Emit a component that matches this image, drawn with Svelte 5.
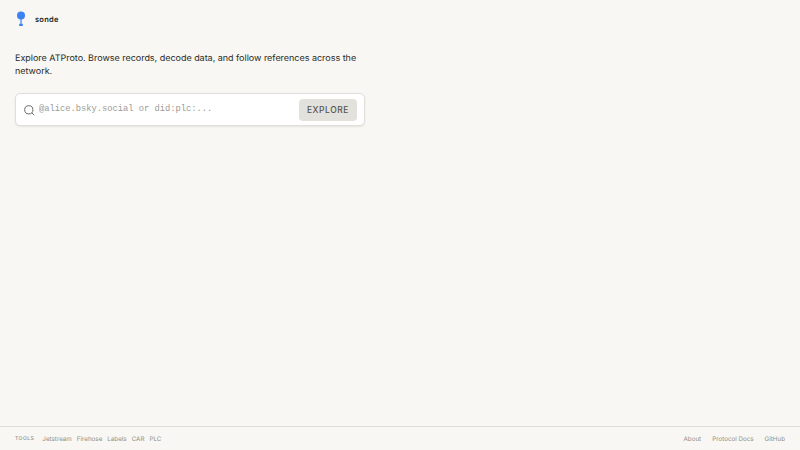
<script>
  const tools = ['Jetstream', 'Firehose', 'Labels', 'CAR', 'PLC'];
  const links = ['About', 'Protocol Docs', 'GitHub'];
</script>

<div class="page">
  <header class="header">
    <svg class="logo" width="12" height="16" viewBox="0 0 12 16" aria-hidden="true">
      <circle cx="6" cy="4.6" r="4" fill="#3b82f6" />
      <rect x="5.4" y="8" width="1.2" height="5" fill="#3b82f6" />
      <rect x="4.2" y="12.8" width="3.6" height="2.2" fill="#3b82f6" />
    </svg>
    <span class="brand">sonde</span>
  </header>

  <main class="main">
    <p class="intro">Explore ATProto. Browse records, decode data, and follow references across the network.</p>
    <form class="search" onsubmit={(e) => e.preventDefault()}>
      <svg class="icon" width="11" height="11" viewBox="0 0 11 11" fill="none" stroke="#6b6b66" stroke-width="1" aria-hidden="true">
        <circle cx="4.8" cy="4.8" r="4.1" />
        <path d="M7.8 7.8 10.2 10.2" />
      </svg>
      <input class="input" placeholder="@alice.bsky.social or did:plc:..." />
      <button class="button" type="submit">EXPLORE</button>
    </form>
  </main>

  <footer class="footer">
    <nav class="group left">
      <span class="label">TOOLS</span>
      {#each tools as t}<a href="#top">{t}</a>{/each}
    </nav>
    <nav class="group right">
      {#each links as l}<a href="#top">{l}</a>{/each}
    </nav>
  </footer>
</div>

<style>
  :global(body) {
    margin: 0;
    background: #f8f7f3;
  }
  .page {
    height: 450px;
    display: flex;
    flex-direction: column;
    font-family: Inter, "Liberation Sans", sans-serif;
    color: #1f1f1c;
    overflow: hidden;
    text-rendering: geometricPrecision;
  }
  .header {
    display: flex;
    align-items: center;
    gap: 8px;
    padding: 11px 15px 0;
    height: 16px;
  }
  .logo {
    flex: none;
    margin-top: -1px;
  }
  .brand {
    font-size: 7.5px;
    font-weight: 600;
    letter-spacing: 0.25px;
  }
  .main {
    flex: 1;
    padding: 25px 15px 0;
  }
  .intro {
    margin: 0;
    width: 350px;
    font-size: 9px;
    line-height: 13px;
    letter-spacing: -0.02px;
    color: #2a2a26;
  }
  .search {
    margin-top: 15px;
    width: 350px;
    height: 33px;
    box-sizing: border-box;
    display: flex;
    align-items: center;
    padding: 0 7px 0 8px;
    background: #fff;
    border: 1px solid #dfded9;
    border-radius: 5px;
    box-shadow: 0 1px 2px rgba(0, 0, 0, 0.08);
  }
  .icon {
    flex: none;
    margin: 1px 0 0 0;
  }
  .input {
    flex: 1;
    min-width: 0;
    margin-left: 4px;
    border: 0;
    outline: 0;
    padding: 0;
    background: none;
    font-family: "Liberation Mono", monospace;
    font-size: 8.75px;
    margin-top: -2px;
  }
  .input::placeholder {
    color: #9a9a94;
    opacity: 1;
  }
  .button {
    flex: none;
    width: 58px;
    height: 22px;
    border: 0;
    padding: 0;
    border-radius: 4px;
    background: #e2e1dc;
    color: #55554f;
    font-family: Inter, "Liberation Sans", sans-serif;
    font-size: 8.5px;
    font-weight: 500;
    letter-spacing: 0.55px;
  }
  .footer {
    height: 24px;
    box-sizing: border-box;
    border-top: 1px solid #dfded9;
    display: flex;
    align-items: center;
    justify-content: space-between;
    padding: 0 15px;
  }
  .group {
    display: flex;
    align-items: center;
  }
  .left {
    gap: 5px;
  }
  .right {
    gap: 11px;
  }
  .footer a {
    font-size: 6.25px;
    color: #8f8f89;
    text-decoration: none;
  }
  .label {
    font-size: 5px;
    letter-spacing: 0.5px;
    color: #8f8f89;
    font-weight: 500;
    margin-right: 3px;
  }
</style>
